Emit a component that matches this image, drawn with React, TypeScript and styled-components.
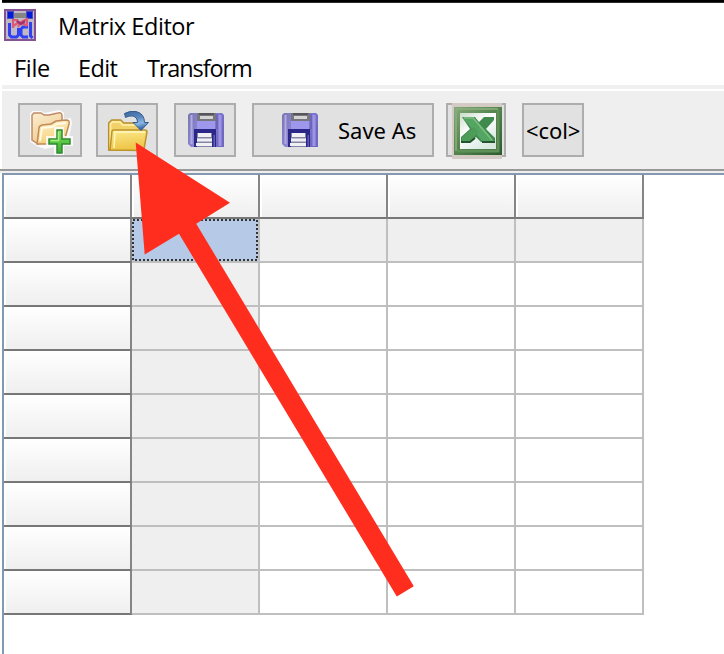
import React from 'react';
import styled, { createGlobalStyle } from 'styled-components';

const Global = createGlobalStyle`
  * { box-sizing: border-box; }
  html, body { margin: 0; padding: 0; background: #fff; overflow: hidden; }
`;

const Window = styled.div`
  position: relative;
  display: flex;
  flex-direction: column;
  width: 724px;
  height: 654px;
  overflow: hidden;
  background: #fff;
  color: #000;
  font-family: 'Open Sans', 'Noto Sans', sans-serif;
`;

const TopEdge = styled.div`
  flex: none;
  height: 3px;
  margin-left: 2px;
  background: linear-gradient(#000 0 2px, #2b2b2b 2px);
`;

const TitleBar = styled.header`
  flex: none;
  display: flex;
  align-items: center;
  height: 46px;
  padding: 0 0 0 4px;

  svg { flex: none; margin-bottom: 2px; }
`;

const Title = styled.h1`
  margin: 0 0 1px 21px;
  font-size: 23.5px;
  font-weight: 400;
  line-height: 32px;
  white-space: nowrap;
  letter-spacing: -0.45px;
`;

const MenuBar = styled.nav`
  flex: none;
  display: flex;
  align-items: center;
  height: 36px;
  padding: 2px 0 0 14px;
`;

const MenuItem = styled.span<{ $width: number; $spacing: number }>`
  flex: none;
  width: ${(p) => p.$width}px;
  font-size: 23.5px;
  line-height: 32px;
  white-space: nowrap;
  letter-spacing: ${(p) => p.$spacing}px;
`;

const MenuRule = styled.div`
  flex: none;
  height: 4px;
  margin: 0 0 2px 2px;
  background: #f0f0f0;
`;

const Toolbar = styled.div`
  flex: none;
  display: flex;
  height: 78px;
  margin-left: 2px;
  padding: 12px 0 0 16px;
  background: #efefef;
`;

const ToolbarEdge = styled.div`
  flex: none;
  height: 4px;
  background: #efefef;
  border-top: 2px solid #999;
`;

const ToolButton = styled.button<{ $width: number; $gap: number; $inset?: string }>`
  flex: none;
  display: flex;
  align-items: center;
  justify-content: flex-start;
  width: ${(p) => p.$width}px;
  height: 54px;
  margin: 0 ${(p) => p.$gap}px 0 0;
  padding: ${(p) => p.$inset ?? '0'};
  border: 2px solid #adadad;
  border-radius: 0;
  background: #e1e1e1;
  color: #000;
  font-family: 'Noto Sans', sans-serif;
  font-size: 22px;
  line-height: 30px;
  white-space: nowrap;

  svg { flex: none; overflow: visible; }
`;

const SaveAsLabel = styled.span`
  margin-left: 20px;
  letter-spacing: 0;
`;

const ColLabel = styled.span`
  letter-spacing: -0.1px;
`;

const Sheet = styled.main`
  flex: 1;
  margin-left: 2px;
  border-top: 2px solid #8399b2;
  border-left: 2px solid #8399b2;
  background: #fff;
`;

const Grid = styled.div`
  display: grid;
  grid-template-columns: repeat(5, 128px);
  grid-auto-rows: 44px;
`;

const HeaderCell = styled.div`
  border-right: 2px solid #858585;
  border-bottom: 2px solid #777;
  background: linear-gradient(#fff, #efefef) 2px 0 / 100% 42px no-repeat #fff;
`;

const Cell = styled.div<{ $shaded: boolean; $selected: boolean }>`
  padding: 0;
  border-right: 2px solid #bfbfbf;
  border-bottom: 2px solid #bfbfbf;
  background: ${(p) => (p.$selected ? '#b6c9e7' : p.$shaded ? '#efefef' : '#fff')};
`;

const DottedFocus = styled.svg`
  display: block;
  width: 126px;
  height: 42px;
`;

const Pointer = styled.svg`
  position: absolute;
  left: 0;
  top: 0;
  pointer-events: none;
`;

const AppIcon = () => (
  <svg width="33" height="33" viewBox="0 0 33 33">
    <path fill="#855391" d="M0 0h32v32H0z" />
    <path fill="#c0b9c5" d="M2 2h28v28H2z" />
    <path fill="#858585" d="M10 4h13v5H10z" />
    <path fill="#4850c4" d="M3 2h7v8H3zM22 2h7v8h-7z" />
    <path fill="#0519d8" d="M4 3h5v6H4zM23 3h5v6h-5z" />
    <path fill="none" strokeWidth="3" stroke="#2f41f4" d="M5.500 14v12l2 2h5l2-2v-7M24 18h-5l-2 2v6l2 2h5M26.500 13v14l2 2" />
    <g fill="none" strokeWidth="2.200">
      <path stroke="#dc5a72" d="M9 19v-8h4l1 3-5 3M14 18l3-5 6-3v7M17 13l6 4" />
      <path stroke="#a03070" d="M13 12l4 3 4-3" />
    </g>
  </svg>
);

const NewFolderIcon = () => (
  <svg width="42" height="42" viewBox="0 0 42 42">
    <defs>
      <linearGradient id="newBack" x1="0" y1="0" x2="0.5" y2="1">
        <stop stopColor="#fbeed2" />
        <stop offset="1" stopColor="#efc98a" />
      </linearGradient>
      <linearGradient id="newFront" x1="0" y1="0" x2="0.3" y2="1">
        <stop stopColor="#fff3cc" />
        <stop offset="1" stopColor="#f5d07c" />
      </linearGradient>
      <linearGradient id="newPlus" x1="0" y1="0" x2="0" y2="1">
        <stop stopColor="#8fe065" />
        <stop offset="0.5" stopColor="#5cc846" />
        <stop offset="1" stopColor="#3aa82f" />
      </linearGradient>
    </defs>
    <path d="M1 31V4l2-2h8l3 2 15-3 4 2v7l7-1 1 4-4 20-22 5-8-3z" fill="#fff" stroke="#fff" strokeWidth="2" opacity=".85" />
    <path d="M2 30V5l2-2h7l3 2h5l9-2q4-1 4 3v22L8 34z" fill="url(#newBack)" stroke="#c08a68" strokeWidth="1.5" />
    <path d="M7 34l2-16q0-2 3-3l9-1 5-3 10-1q4 0 3 4l-5 18-18 2z" fill="url(#newFront)" stroke="#c08a5c" strokeWidth="1.500" />
    <path d="M10 31l2-13 10-1 5-3 9-1" fill="none" stroke="#fffbe6" strokeWidth="1.800" />
    <path d="M26 19h6v9h9v6h-9v9h-6v-9h-8v-6h8z" fill="none" stroke="#fff" strokeWidth="4" opacity=".8" />
    <path d="M27 20h5v9h8v5h-8v9h-5v-9h-8v-5h8z" fill="url(#newPlus)" stroke="#2e8b31" strokeWidth="1.5" />
    <path d="M28.500 22v8.500h-8" fill="none" stroke="#a8f080" strokeWidth="1.5" />
  </svg>
);

const OpenFolderIcon = () => (
  <svg width="42" height="42" viewBox="0 0 42 42">
    <defs>
      <linearGradient id="openFront" x1="0" y1="0" x2="0.2" y2="1">
        <stop stopColor="#fbea8c" />
        <stop offset="1" stopColor="#eec546" />
      </linearGradient>
      <linearGradient id="openArrow" x1="0" y1="0" x2="0.3" y2="1">
        <stop stopColor="#3a659f" />
        <stop offset="0.45" stopColor="#5b88bd" />
        <stop offset="0.75" stopColor="#8db8e4" />
        <stop offset="1" stopColor="#3a6ca8" />
      </linearGradient>
    </defs>
    <path d="M2.700 41V14l3-3h9l3 3h14q3 0 3 3v24z" fill="#f0d268" stroke="#b98f2e" strokeWidth="1.5" />
    <path d="M4.500 39V15l2-2h7.500l3 3h15" fill="none" stroke="#ffeaa0" strokeWidth="1.800" />
    <path d="M4 41l2-19q0-1 2-1h31q2 0 2 2l-3 17q0 1.500-2 1.500z" fill="url(#openFront)" stroke="#bd932b" strokeWidth="1.5" />
    <path d="M8 39l1-16h30" fill="none" stroke="#fff8c0" strokeWidth="1.5" />
    <path d="M18.500 4.500Q24 1.500 30 2.500q8.500 2 8.500 11h4L35 21.500l-8-8h4.500q0-5.500-5-6.500-4-.5-7 1.500z" fill="url(#openArrow)" stroke="#345c92" strokeWidth="1" />
  </svg>
);

const FloppyIcon = ({ id }: { id: string }) => (
  <svg width="36" height="34" viewBox="0 0 36 34">
    <defs>
      <linearGradient id={id} x1="0" y1="0" x2="1" y2="0.35">
        <stop stopColor="#7a76ae" />
        <stop offset="0.5" stopColor="#8f89de" />
        <stop offset="1" stopColor="#7168c4" />
      </linearGradient>
    </defs>
    <path d="M2 0h32l2 2v32H3l-3-3V2z" fill={`url(#${id})`} />
    <path d="M3.500 2v29" stroke="#b0abe0" strokeWidth="2" />
    <path d="M32 2v31" stroke="#9c96e2" strokeWidth="3" />
    <path d="M29 1v15" stroke="#5f579e" />
    <path d="M9 8h18v8H9z" fill="#9e98ec" />
    <path d="M9 0h19v8H9z" fill="#77767c" />
    <path d="M12 3h13v3H12z" fill="#d5d4d4" />
    <path d="M11 1h15" stroke="#55555a" strokeWidth="2" />
    <path d="M6 16h22v18H6z" fill="#2b2788" />
    <path d="M9 20h15v14H9z" fill="#8484a4" />
    <path d="M10 20h13v4H10zM9 25.500h15v3H9zM8 30h16v3H8z" fill="#f1f1f5" />
    <path d="M25.500 22h1.500v12h-1.500z" fill="#6260b4" />
  </svg>
);

const ExcelIcon = () => (
  <svg width="50" height="56" viewBox="0 0 50 56">
    <defs>
      <linearGradient id="xlFrame" x1="0" y1="0" x2="1" y2="1">
        <stop stopColor="#84a878" />
        <stop offset="0.4" stopColor="#5b8b54" />
        <stop offset="1" stopColor="#2c5a2e" />
      </linearGradient>
      <linearGradient id="xlPage" x1="0" y1="0" x2="0.7" y2="1">
        <stop stopColor="#cbdcc9" />
        <stop offset="0.45" stopColor="#fff" />
        <stop offset="1" stopColor="#d8e8e0" />
      </linearGradient>
    </defs>
    <path d="M0 0h50v56H0z" fill="#d3cbc3" />
    <path d="M2 4h48v48H2z" fill="url(#xlFrame)" />
    <path d="M5 48h41V7" fill="none" stroke="#5f9058" strokeWidth="3" />
    <path d="M4 48V6h42" fill="none" stroke="#8fae80" strokeWidth="1.5" />
    <path d="M8 10h36v36H8z" fill="url(#xlPage)" />
    <path d="M9 39v-5l9-8-8-12h13l4 5 5-5h10v3l-8 9 9 9v4H29l-5-5-6 5z" fill="#3f8a4c" />
    <path d="M10 14h12l20 24H30z" fill="#55a562" />
    <path d="M12 15h9l19 22" fill="none" stroke="#7dbd80" strokeWidth="1.500" />
    <path d="M10 38v-4l12-10 5 5-9 9z" fill="#4f9b58" />
    <path d="M9 39h9l5-4M30 39h13" fill="none" stroke="#23552e" strokeWidth="2" />
  </svg>
);

const columns = [0, 1, 2, 3, 4];
const rows = [0, 1, 2, 3, 4, 5, 6, 7, 8, 9];

export default function App() {
  return (
    <>
      <Global />
      <Window>
        <TopEdge />
        <TitleBar>
          <AppIcon />
          <Title>Matrix Editor</Title>
        </TitleBar>
        <MenuBar>
          <MenuItem $width={64} $spacing={-0.3}>File</MenuItem>
          <MenuItem $width={69} $spacing={-0.6}>Edit</MenuItem>
          <MenuItem $width={120} $spacing={-1.1}>Transform</MenuItem>
        </MenuBar>
        <MenuRule />
        <Toolbar>
          <ToolButton $width={64} $gap={14} $inset="2px 0 0 10px"><NewFolderIcon /></ToolButton>
          <ToolButton $width={62} $gap={16} $inset="0 0 0 8px"><OpenFolderIcon /></ToolButton>
          <ToolButton $width={62} $gap={16} $inset="0 0 0 12px"><FloppyIcon id="floppySave" /></ToolButton>
          <ToolButton $width={182} $gap={12} $inset="0 0 0 28px">
            <FloppyIcon id="floppySaveAs" />
            <SaveAsLabel>Save As</SaveAsLabel>
          </ToolButton>
          <ToolButton $width={60} $gap={16} $inset="2px 0 0 4px"><ExcelIcon /></ToolButton>
          <ToolButton $width={62} $gap={0} $inset="0 0 0 2px"><ColLabel>&lt;col&gt;</ColLabel></ToolButton>
        </Toolbar>
        <ToolbarEdge />
        <Sheet>
          <Grid>
            {rows.map((r) =>
              columns.map((c) =>
                r === 0 || c === 0 ? (
                  <HeaderCell key={`${r}-${c}`} />
                ) : (
                  <Cell key={`${r}-${c}`} $shaded={r === 1 || c === 1} $selected={r === 1 && c === 1}>
                    {r === 1 && c === 1 && (
                      <DottedFocus viewBox="0 0 126 42">
                        <rect x="1" y="1" width="124" height="40" fill="none" stroke="#333" strokeWidth="2" strokeDasharray="2 2" />
                      </DottedFocus>
                    )}
                  </Cell>
                ),
              ),
            )}
          </Grid>
        </Sheet>
        <Pointer width="724" height="654" viewBox="0 0 724 654">
          <path d="M135.7 142.5L230 202.7 196.2 223.7 413.8 586.3 396.8 596.5 179 233.8 144.7 254.5z" fill="#ff2d1e" />
        </Pointer>
      </Window>
    </>
  );
}
